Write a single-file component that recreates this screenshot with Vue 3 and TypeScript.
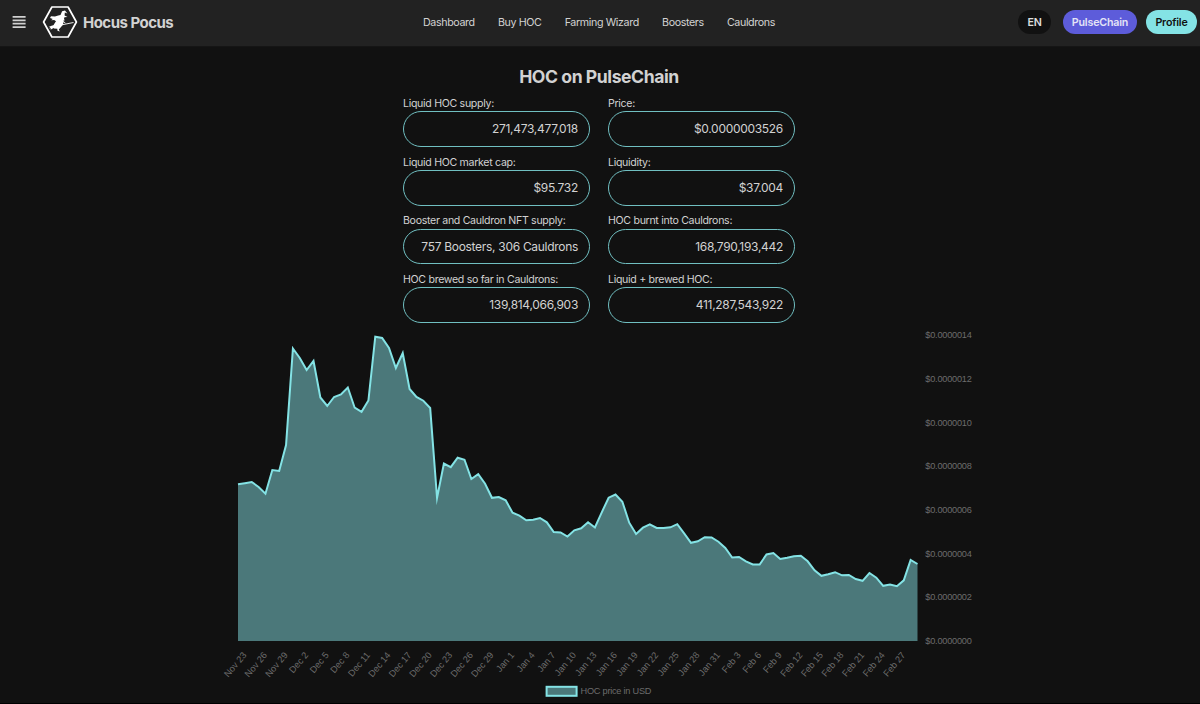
<script setup lang="ts">
interface Stat {
  label: string
  value: string
}

const links: string[] = ['Dashboard', 'Buy HOC', 'Farming Wizard', 'Boosters', 'Cauldrons']

const stats: Stat[] = [
  { label: 'Liquid HOC supply:', value: '271,473,477,018' },
  { label: 'Price:', value: '$0.0000003526' },
  { label: 'Liquid HOC market cap:', value: '$95.732' },
  { label: 'Liquidity:', value: '$37.004' },
  { label: 'Booster and Cauldron NFT supply:', value: '757 Boosters, 306 Cauldrons' },
  { label: 'HOC burnt into Cauldrons:', value: '168,790,193,442' },
  { label: 'HOC brewed so far in Cauldrons:', value: '139,814,066,903' },
  { label: 'Liquid + brewed HOC:', value: '411,287,543,922' },
]

// Height of the price curve for each day, in chart units measured from the chart's top edge.
const levels: number[] = [
  484.3, 483.2, 482, 487, 493.7, 470, 471, 445, 348.5, 358, 370, 361, 397.5, 406, 397, 394.5, 387.5,
  407.7, 411.8, 400.5, 336.7, 338, 348, 368, 353, 389, 397, 400.7, 408, 498, 463.5, 467.2, 457.7,
  459.7, 479, 474.2, 483.7, 497.8, 497, 500.3, 512.7, 515.7, 520.3, 519.7, 518, 522.3, 532, 532.5,
  536.5, 530.3, 528.3, 522.2, 527.5, 512.3, 497.7, 494.5, 501.7, 522.7, 534, 527.7, 524.3, 528, 528,
  527.3, 524.2, 533.3, 542.8, 541.3, 537.2, 537.5, 541.7, 548, 557.5, 557, 561.3, 564.5, 564.5,
  554.5, 553, 559, 557.7, 556.2, 555.8, 561.3, 570.3, 575.8, 574.3, 572.2, 575.3, 575, 579, 580.8,
  573, 577.7, 585.8, 584.5, 586.2, 580.3, 560, 564,
]

const top = 325
const left = 220
const baseline = 641 - top
const startX = 238 - left
const step = 679.5 / 99

const curve: string = levels
  .map((y, i) => `${(startX + i * step).toFixed(2)},${(y - top).toFixed(1)}`)
  .join(' ')
const area = `${startX},${baseline} ${curve} ${startX + 679.5},${baseline}`

const months = [
  { name: 'Nov', first: 23, last: 29 },
  { name: 'Dec', first: 2, last: 29 },
  { name: 'Jan', first: 1, last: 31 },
  { name: 'Feb', first: 3, last: 27 },
]
const days: string[] = months.flatMap((m) => {
  const out: string[] = []
  for (let d = m.first; d <= m.last; d += 3) out.push(`${m.name} ${d}`)
  return out
})

const prices = Array.from({ length: 8 }, (_, i) => ({
  text: '$0.00000' + String(i * 2).padStart(2, '0'),
  y: baseline - i * 43.7,
}))
</script>

<template>
  <div class="page">
    <header class="bar">
      <div class="brand">
        <svg class="burger" width="14" height="12" viewBox="0 0 14 12">
          <path d="M.6.9h13M.6 4.3h13M.6 7.7h13M.6 11.1h13" />
        </svg>
        <svg class="logo" width="36" height="34" viewBox="0 0 36 34">
          <path class="hex" d="M9.9 2H26.1L34.4 17 26.1 32H9.9L1.6 17Z" />
          <path
            class="witch"
            d="M9 11.2l4 .4 3.2-1.2 2.3-.3 1.6-3.9 2.9-.6 2.4 3-2.6-1.2-.2 3.2 2.9 1.5-3.1.1-.4 1.8.8 1.3-1.6.5.4 1.3-.9 3-2.1 2.4-1.8 1.9 1 2.2-2.3-.8-.2-2-3.4-.4-.9-2.3 1.5-2.7 1.5-2.1-1.8-1.2-3 .2 1.6-1.2-2.8-1.2z"
          />
          <path class="broom" d="M12.5 21.3L31.5 17.5M20 15.7l3.4 2.3" />
          <path class="witch" d="M13.5 20.2l-3.3.3-3.8 1.4 2 .3-1.3 1.3 2-.3-.6 1.6 2.7-1.6 2.7-1.5z" />
        </svg>
        <span class="name">Hocus Pocus</span>
      </div>
      <nav class="links">
        <a v-for="l in links" :key="l">{{ l }}</a>
      </nav>
      <div class="actions">
        <button class="pill lang">EN</button>
        <button class="pill chain">PulseChain</button>
        <button class="pill profile">Profile</button>
      </div>
    </header>

    <main>
      <h1>HOC on PulseChain</h1>
      <section class="stats">
        <div v-for="s in stats" :key="s.label" class="stat">
          <label>{{ s.label }}</label>
          <div class="field">{{ s.value }}</div>
        </div>
      </section>
      <svg class="chart" width="760" height="379" viewBox="0 0 760 379">
        <polygon class="area" :points="area" />
        <polyline class="line" :points="curve" />
        <text v-for="p in prices" :key="p.text" class="tick" x="705.3" :y="p.y + 3" textLength="46.5">
          {{ p.text }}
        </text>
        <text
          v-for="(d, i) in days"
          :key="d"
          class="tick"
          text-anchor="end"
          :transform="`translate(${startX + i * step * 3 + 9} 330.4) rotate(-50)`"
        >
          {{ d }}
        </text>
        <rect class="swatch" x="326.6" y="361.8" width="30" height="9" />
        <text class="tick" x="360.5" y="369.4" textLength="71">HOC price in USD</text>
      </svg>
    </main>
  </div>
</template>

<style>
body {
  background: #111;
}
</style>

<style scoped>
.page {
  box-sizing: border-box;
  height: 704px;
  overflow: hidden;
  background: #111;
  border-bottom: 1px solid #000;
  color: #d2d2d2;
  font-family: Inter, 'Liberation Sans', sans-serif;
}
.bar {
  box-sizing: border-box;
  display: grid;
  grid-template-columns: 1fr auto 1fr;
  align-items: center;
  height: 47px;
  padding: 0 3px 2px 12px;
  background: #222;
  border-bottom: 1px solid #151515;
}
.brand {
  display: flex;
  align-items: center;
}
.burger {
  fill: none;
  stroke: #d0d0d0;
  stroke-width: 1.7;
}
.logo {
  margin-left: 16px;
}
.hex {
  fill: none;
  stroke: #fff;
  stroke-width: 1.7;
  stroke-linejoin: round;
}
.witch {
  fill: #fff;
}
.broom {
  fill: none;
  stroke: #fff;
  stroke-width: 0.9;
}
.name {
  margin-left: 5px;
  font-size: 15px;
  font-weight: 700;
  letter-spacing: -0.52px;
}
.links {
  display: flex;
  gap: 23.2px;
  margin-right: 11px;
  font-size: 10.7px;
  letter-spacing: -0.38px;
}
.actions {
  display: flex;
  justify-content: flex-end;
}
.pill {
  height: 24px;
  padding: 0;
  border: 0;
  border-radius: 12px;
  font-family: inherit;
  font-size: 10.7px;
  font-weight: 600;
  letter-spacing: -0.2px;
}
.lang {
  width: 33px;
  background: #111;
  color: #ddd;
}
.chain {
  width: 74px;
  margin-left: 12px;
  background: #5d5cda;
  color: #e4e4f6;
}
.profile {
  width: 51px;
  margin-left: 9px;
  background: #84e3e5;
  color: #111;
}
main {
  display: flex;
  flex-direction: column;
  align-items: center;
}
h1 {
  margin: 19px 2px 9px 0;
  font-size: 17.6px;
  line-height: 22px;
  font-weight: 700;
  letter-spacing: -0.44px;
}
.stats {
  display: grid;
  grid-template-columns: 187px 187px;
  align-content: start;
  column-gap: 18px;
  row-gap: 8px;
  height: 228px;
  margin-right: 2px;
}
.stat {
  height: 50.67px;
}
label {
  display: block;
  height: 14.3px;
  font-size: 10.6px;
  line-height: 13px;
  letter-spacing: -0.31px;
  white-space: nowrap;
}
.field {
  box-sizing: border-box;
  height: 35.6px;
  padding-right: 11px;
  border: 1px solid #70bfc1;
  border-radius: 18px;
  font-size: 12px;
  line-height: 34px;
  letter-spacing: -0.3px;
  text-align: right;
  white-space: nowrap;
}
.chart {
  display: block;
}
.area {
  fill: #4b787a;
}
.line {
  fill: none;
  stroke: #84e3e5;
  stroke-width: 2;
  stroke-miterlimit: 10;
}
.tick {
  fill: #6c6c6c;
  font-family: 'Liberation Sans', Arial, sans-serif;
  font-size: 9.2px;
}
.swatch {
  fill: #4b787a;
  stroke: #84e3e5;
  stroke-width: 2;
}
</style>
